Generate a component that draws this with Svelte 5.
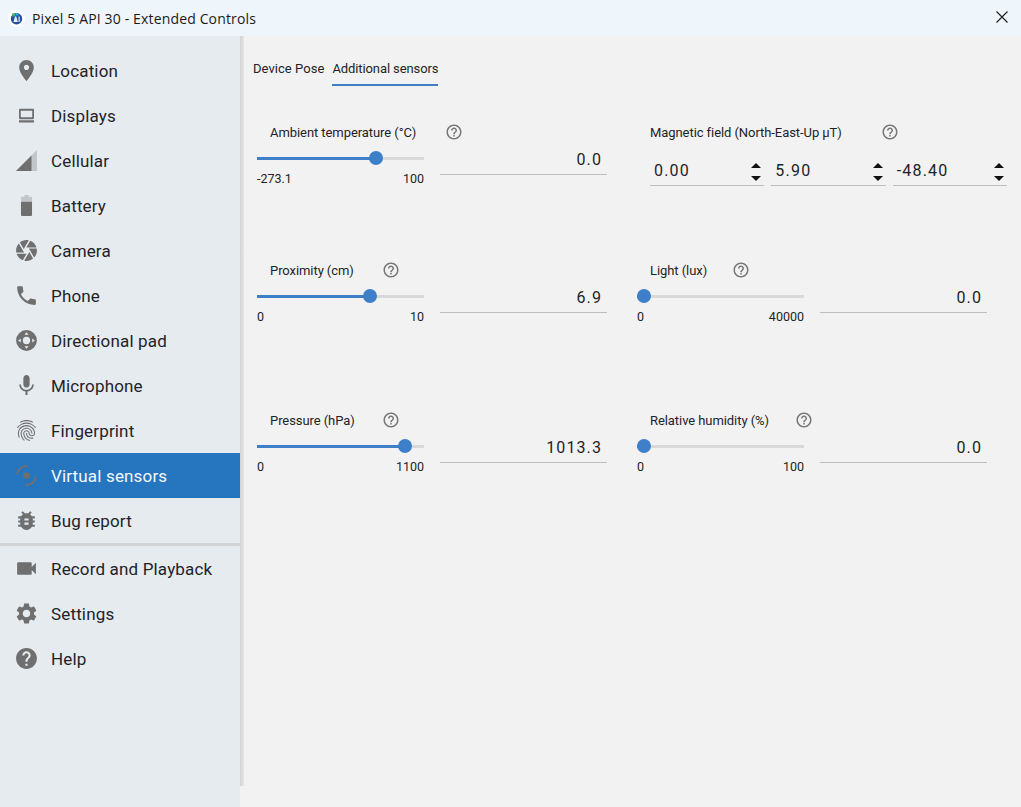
<script>
  const icons = {
    place: 'M12 2C8.13 2 5 5.13 5 9c0 5.25 7 13 7 13s7-7.75 7-13c0-3.87-3.13-7-7-7zm0 9.5c-1.38 0-2.5-1.12-2.5-2.5s1.12-2.5 2.5-2.5 2.5 1.12 2.5 2.5-1.12 2.5-2.5 2.5z',
    display: 'M5.800 5.500h12.400c.55 0 1 .45 1 1v8c0 .55-.45 1-1 1H5.800c-.55 0-1-.45-1-1v-8c0-.55.45-1 1-1zm.7 2v6.200h11V7.500h-11zM4.800 16.500h14.400v2.300H4.800z',
    camera: 'M9.4 10.5l4.77-8.26C13.47 2.09 12.75 2 12 2c-2.4 0-4.6.85-6.32 2.25l3.66 6.35.06-.1zM21.54 9c-.92-2.92-3.15-5.26-6-6.34L11.88 9h9.66zm.26 1h-7.49l.29.5 4.76 8.25C21 16.97 22 14.61 22 12c0-.69-.07-1.35-.2-2zM8.54 12l-3.9-6.75C3.01 7.03 2 9.39 2 12c0 .69.07 1.35.2 2h7.49l-1.15-2zm-6.08 3c.92 2.92 3.15 5.26 6 6.34L12.12 15H2.46zm11.27 0l-3.9 6.76c.7.15 1.42.24 2.17.24 2.4 0 4.6-.85 6.32-2.25l-3.66-6.35-.93 1.6z',
    phone: 'M6.62 10.79c1.44 2.83 3.76 5.14 6.59 6.59l2.2-2.2c.27-.27.67-.36 1.02-.24 1.12.37 2.33.57 3.57.57.55 0 1 .45 1 1V20c0 .55-.45 1-1 1-9.39 0-17-7.61-17-17 0-.55.45-1 1-1h3.5c.55 0 1 .45 1 1 0 1.25.2 2.45.57 3.57.11.35.03.74-.25 1.02l-2.2 2.2z',
    dpad: 'M12 2a10 10 0 1 0 0 20 10 10 0 0 0 0-20zm0 2l2 2.5h-4L12 4zM4 12l2.5-2v4L4 12zm16 0l-2.5 2v-4l2.500 2zm-8 8l-2-2.500h4L12 20zm0-11.500a3.500 3.500 0 1 1 0 7 3.500 3.500 0 0 1 0-7z',
    mic: 'M12 14c1.66 0 2.99-1.34 2.99-3L15 5c0-1.66-1.34-3-3-3S9 3.34 9 5v6c0 1.66 1.34 3 3 3zm5.3-3c0 3-2.54 5.1-5.3 5.1S6.7 14 6.7 11H5c0 3.41 2.72 6.23 6 6.72V21h2v-3.28c3.28-.48 6-3.3 6-6.72h-1.7z',
    finger: 'M17.81 4.47c-.08 0-.16-.02-.23-.06C15.66 3.42 14 3 12.01 3c-1.98 0-3.86.47-5.57 1.41-.24.13-.54.04-.68-.2-.13-.24-.04-.55.2-.68C7.82 2.52 9.86 2 12.01 2c2.13 0 3.99.47 6.03 1.52.25.13.34.43.21.67-.09.18-.26.28-.44.28zM3.5 9.72c-.1 0-.2-.03-.29-.09-.23-.16-.28-.47-.12-.7.99-1.4 2.25-2.5 3.75-3.27C9.98 4.04 14 4.03 17.15 5.65c1.5.77 2.76 1.86 3.75 3.25.16.22.11.54-.12.7-.23.16-.54.11-.7-.12-.9-1.26-2.04-2.25-3.39-2.94-2.87-1.47-6.54-1.47-9.4.01-1.36.7-2.5 1.7-3.4 2.96-.08.14-.23.21-.39.21zm6.25 12.07c-.13 0-.26-.05-.35-.15-.87-.87-1.34-1.43-2.01-2.64-.69-1.23-1.05-2.73-1.05-4.34 0-2.97 2.54-5.39 5.66-5.39s5.66 2.42 5.66 5.39c0 .28-.22.5-.5.5s-.5-.22-.5-.5c0-2.42-2.09-4.39-4.66-4.39-2.57 0-4.66 1.97-4.66 4.39 0 1.44.32 2.77.93 3.85.64 1.15 1.08 1.64 1.85 2.42.19.2.19.51 0 .71-.11.1-.24.15-.37.15zm7.17-1.85c-1.19 0-2.24-.3-3.1-.89-1.49-1.01-2.38-2.65-2.38-4.39 0-.28.22-.5.5-.5s.5.22.5.5c0 1.41.72 2.74 1.94 3.56.71.48 1.54.71 2.54.71.24 0 .64-.03 1.04-.1.27-.05.53.13.58.41.05.27-.13.53-.41.58-.57.11-1.07.12-1.21.12zM14.91 22c-.04 0-.09-.01-.13-.02-1.59-.44-2.63-1.03-3.72-2.1-1.4-1.39-2.17-3.24-2.17-5.22 0-1.62 1.38-2.94 3.08-2.94 1.7 0 3.08 1.32 3.08 2.94 0 1.07.93 1.94 2.08 1.94s2.08-.87 2.08-1.94c0-3.77-3.25-6.83-7.25-6.83-2.84 0-5.44 1.58-6.61 4.03-.39.81-.59 1.76-.59 2.8 0 .78.07 2.01.67 3.61.1.26-.03.55-.29.64-.26.1-.55-.04-.64-.29-.49-1.31-.73-2.61-.73-3.96 0-1.2.23-2.29.68-3.24 1.33-2.79 4.28-4.6 7.51-4.6 4.55 0 8.25 3.51 8.25 7.83 0 1.62-1.38 2.94-3.08 2.94s-3.08-1.32-3.08-2.94c0-1.07-.93-1.94-2.08-1.94s-2.08.87-2.08 1.94c0 1.71.66 3.31 1.87 4.51.95.94 1.86 1.46 3.27 1.85.27.07.42.35.35.61-.05.23-.26.38-.47.38z',
    bug: 'M20 8h-2.81c-.45-.78-1.07-1.45-1.82-1.96L17 4.41 15.59 3l-2.17 2.17C12.96 5.06 12.49 5 12 5c-.49 0-.96.06-1.41.17L8.41 3 7 4.41l1.62 1.63C7.88 6.55 7.26 7.22 6.81 8H4v2h2.09c-.05.33-.09.66-.09 1v1H4v2h2v1c0 .34.04.67.09 1H4v2h2.81c1.04 1.79 2.97 3 5.19 3s4.15-1.21 5.19-3H20v-2h-2.09c.05-.33.09-.66.09-1v-1h2v-2h-2v-1c0-.34-.04-.67-.09-1H20V8zm-6 8h-4v-2h4v2zm0-4h-4v-2h4v2z',
    video: 'M17 10.5V7c0-.55-.45-1-1-1H4c-.55 0-1 .45-1 1v10c0 .55.45 1 1 1h12c.55 0 1-.45 1-1v-3.5l4 4v-11l-4 4z',
    gear: 'M19.14 12.94c.04-.3.06-.61.06-.94 0-.32-.02-.64-.07-.94l2.03-1.58c.18-.14.23-.41.12-.61l-1.92-3.32c-.12-.22-.37-.29-.59-.22l-2.39.96c-.5-.38-1.03-.7-1.62-.94l-.36-2.54c-.04-.24-.24-.41-.48-.41h-3.84c-.24 0-.43.17-.47.41l-.36 2.54c-.59.24-1.13.57-1.62.94l-2.39-.96c-.22-.08-.47 0-.59.22L2.74 8.87c-.12.21-.08.47.12.61l2.03 1.58c-.05.3-.09.63-.09.94s.02.64.07.94l-2.03 1.58c-.18.14-.23.41-.12.61l1.92 3.32c.12.22.37.29.59.22l2.39-.96c.5.38 1.03.7 1.62.94l.36 2.54c.05.24.24.41.48.41h3.84c.24 0 .44-.17.47-.41l.36-2.54c.59-.24 1.13-.56 1.62-.94l2.39.96c.22.08.47 0 .59-.22l1.92-3.32c.12-.22.07-.47-.12-.61l-2.01-1.58zM12 15.6c-1.98 0-3.6-1.62-3.6-3.6s1.62-3.6 3.6-3.6 3.6 1.62 3.6 3.6-1.62 3.6-3.6 3.6z',
    help: 'M12 2C6.48 2 2 6.48 2 12s4.48 10 10 10 10-4.48 10-10S17.52 2 12 2zm1 17h-2v-2h2v2zm2.07-7.75l-.9.92C13.45 12.9 13 13.5 13 15h-2v-.5c0-1.1.45-2.1 1.17-2.83l1.24-1.26c.37-.36.59-.86.59-1.41 0-1.1-.9-2-2-2s-2 .9-2 2H8c0-2.21 1.79-4 4-4s4 1.79 4 4c0 .88-.36 1.68-.93 2.25z'
  };
  const helpOutline = 'M11 18h2v-2h-2v2zm1-16C6.48 2 2 6.48 2 12s4.48 10 10 10 10-4.48 10-10S17.52 2 12 2zm0 18c-4.41 0-8-3.59-8-8s3.59-8 8-8 8 3.59 8 8-3.59 8-8 8zm0-14c-2.21 0-4 1.790-4 4h2c0-1.1.9-2 2-2s2 .9 2 2c0 2-3 1.750-3 5h2c0-2.250 3-2.500 3-5 0-2.210-1.790-4-4-4z';

  const navTop = [
    ['Location', 'place'], ['Displays', 'display'], ['Cellular', 'cellular'], ['Battery', 'battery'],
    ['Camera', 'camera'], ['Phone', 'phone'], ['Directional pad', 'dpad'], ['Microphone', 'mic'],
    ['Fingerprint', 'finger'], ['Virtual sensors', 'sensors'], ['Bug report', 'bug']
  ];
  const navBottom = [['Record and Playback', 'video'], ['Settings', 'gear'], ['Help', 'help']];

  const rows = [
    [
      { label: 'Ambient temperature (°C)', gap: 28.5, min: '-273.1', max: '100', pct: 71.2, value: '0.0' },
      { label: 'Magnetic field (North-East-Up µT)', gap: 39.6, triple: ['0.00', '5.90', '-48.40'] }
    ],
    [
      { label: 'Proximity (cm)', gap: 28, min: '0', max: '10', pct: 67.6, value: '6.9' },
      { label: 'Light (lux)', gap: 25, min: '0', max: '40000', pct: 4.2, value: '0.0' }
    ],
    [
      { label: 'Pressure (hPa)', gap: 27, min: '0', max: '1100', pct: 88.6, value: '1013.3' },
      { label: 'Relative humidity (%)', gap: 26, min: '0', max: '100', pct: 4.2, value: '0.0' }
    ]
  ];
</script>

{#snippet navItem(item)}
  <div class="item" class:active={item[0] === 'Virtual sensors'}>
    <span class="ico">
      {#if item[1] === 'cellular'}
        <svg viewBox="0 0 21 21" width="21" height="21"><path class="faint" d="M21 0v21H0z" /><path d="M15.500 5.500V21H0z" /></svg>
      {:else if item[1] === 'battery'}
        <svg viewBox="0 0 24 24" width="25" height="25"><path class="faint" d="M10 2h4v1.500h3.300v5H6.700v-5H10z" /><path d="M6.700 8.500h10.600V21a1 1 0 0 1-1 1H7.700a1 1 0 0 1-1-1z" /></svg>
      {:else if item[1] === 'sensors'}
        <svg viewBox="0 0 24 24" width="25" height="25"><circle cx="12" cy="12" r="3.200" /><path class="arc" d="M3 11C3.500 6.500 7 3 11.500 3M21 13c-.5 4.500-4 8-8.500 8" /><path d="M11 1v4l2.500-2zM13 23v-4l-2.500 2z" /></svg>
      {:else}
        <svg viewBox="0 0 24 24" width="25" height="25"><path d={icons[item[1]]} /></svg>
      {/if}
    </span>
    <span class="name">{item[0]}</span>
  </div>
{/snippet}

<div class="window">
  <header class="titlebar">
    <svg class="logo" viewBox="0 0 17 17" width="17" height="17">
      <circle cx="8.500" cy="8.500" r="8.500" fill="#fff" />
      <circle cx="8.500" cy="8.800" r="5.700" fill="#23509f" />
      <path d="M4 3.500h3.500v3H4z" fill="#3fae6b" />
      <path d="M8 3h2.500v2.500H8z" fill="#37a5e0" />
      <path d="M5.500 12l1.500-5.500h1.300L9.800 12zM10.500 6.500h1.200V12h-1.200z" fill="#e8f0fa" />
    </svg>
    <span class="title">Pixel 5 API 30 - Extended Controls</span>
    <svg class="close" viewBox="0 0 12 12" width="12" height="12"><path d="M.5.5l11 11M11.500.5l-11 11" /></svg>
  </header>

  <div class="body">
    <nav class="sidebar">
      <div class="group">
        {#each navTop as item}{@render navItem(item)}{/each}
      </div>
      <div class="sep"></div>
      <div class="group">
        {#each navBottom as item}{@render navItem(item)}{/each}
      </div>
    </nav>

    <main class="content">
      <div class="tabs">
        <span class="tab first">Device Pose</span>
        <span class="tab on">Additional sensors</span>
      </div>

      <div class="rows">
        {#each rows as row}
          <div class="row">
            {#each row as s}
              <section class="sensor">
                <div class="head">
                  <span class="label">{s.label}</span>
                  <svg class="q" style="margin-left: {s.gap}px" viewBox="0 0 24 24" width="18" height="18"><path d={helpOutline} /></svg>
                </div>
                {#if s.triple}
                  <div class="triple">
                    {#each s.triple as v}
                      <div class="spin">
                        <span>{v}</span>
                        <span class="arrows"><i class="up"></i><i class="down"></i></span>
                      </div>
                    {/each}
                  </div>
                {:else}
                  <div class="controls">
                    <div class="slider">
                      <div class="track">
                        <div class="fill" style="width: {s.pct}%"></div>
                        <div class="thumb" style="left: {s.pct}%"></div>
                      </div>
                      <div class="bounds"><span>{s.min}</span><span>{s.max}</span></div>
                    </div>
                    <div class="field">{s.value}</div>
                  </div>
                {/if}
              </section>
            {/each}
          </div>
        {/each}
      </div>
    </main>
  </div>
</div>

<style>
  :global(body) { margin: 0; }
  .window { width: 1021px; height: 807px; display: flex; flex-direction: column; overflow: hidden; background: #f2f2f2; font-family: Roboto, sans-serif; color: #1f2328; }
  .titlebar { height: 36px; flex: none; display: flex; align-items: center; background: #eff6fb; padding: 0 13px 0 8px; }
  .logo { flex: none; }
  .title { margin-left: 7px; font-family: "Open Sans", sans-serif; font-size: 14px; letter-spacing: .15px; color: #1a1a1a; }
  .close { margin: 0 0 2px auto; fill: none; stroke: #222; stroke-width: 1.200; }
  .body { flex: 1; display: flex; min-height: 0; }
  .sidebar { width: 240px; flex: none; box-sizing: border-box; padding-top: 12px; background: #e6ebf0; position: relative; }
  .sidebar::after { content: ""; position: absolute; left: 100%; top: 0; bottom: 21px; width: 4px; background: linear-gradient(to right, #d3d3d5, #e6e6e6); }
  .item { height: 45px; display: flex; align-items: center; padding-left: 14px; font-size: 17px; letter-spacing: .16px; }
  .item.active { background: #2675bf; color: #f4f8fc; }
  .ico { width: 25px; height: 25px; margin-right: 12px; display: flex; align-items: center; justify-content: center; flex: none; }
  .ico svg { fill: #6f6f6f; }
  .ico .faint { fill: #c2c6ca; }
  .ico .arc { fill: none; stroke: #6f6f6f; stroke-width: 1.800; }
  .sep { height: 3px; background: #d2d3d5; }
  .content { flex: 1; padding: 19px 0 0 13px; min-width: 0; }
  .tabs { display: flex; gap: 8px; }
  .tab { font-size: 13px; height: 31px; box-sizing: border-box; padding-top: 6px; }
  .tab.first { letter-spacing: .05px; }
  .tab.on { border-bottom: 2px solid #3e7fca; letter-spacing: -.1px; }
  .rows { padding: 37px 0 0 4px; }
  .row { display: flex; gap: 30px; height: 150px; }
  .row:first-child { height: 138px; }
  .sensor { width: 350px; flex: none; }
  .head { display: flex; align-items: center; height: 18px; padding-left: 13px; }
  .label { font-size: 13px; letter-spacing: -.07px; }
  .q { fill: #777; flex: none; }
  .controls { display: flex; gap: 16px; margin-top: 8px; }
  .slider { width: 167px; }
  .track { height: 3px; background: #d9d9d9; position: relative; margin-top: 8px; }
  .fill { height: 100%; background: #3e7fca; }
  .thumb { position: absolute; top: -6px; width: 14px; height: 14px; margin-left: -7px; border-radius: 50%; background: #3e7fca; }
  .bounds { display: flex; justify-content: space-between; font-size: 12.500px; margin-top: 11px; }
  .field { width: 167px; height: 26px; box-sizing: border-box; border-bottom: 1px solid #bdbdbd; text-align: right; padding: 1px 5px 0 0; font-size: 16px; letter-spacing: 1.100px; }
  .triple { display: flex; gap: 7px; margin: 16px 0 0 13px; width: 357px; }
  .spin { flex: 1; height: 29px; box-sizing: border-box; border-bottom: 1px solid #bdbdbd; display: flex; justify-content: space-between; padding: 4px 0 0 4px; font-size: 16px; letter-spacing: 1.200px; }
  .arrows { display: flex; flex-direction: column; gap: 8px; padding-top: 2px; margin-right: 3px; }
  .arrows i { display: block; width: 0; height: 0; border-left: 5.500px solid transparent; border-right: 5.500px solid transparent; }
  .arrows .up { border-bottom: 5px solid #111; }
  .arrows .down { border-top: 5px solid #111; }
</style>
